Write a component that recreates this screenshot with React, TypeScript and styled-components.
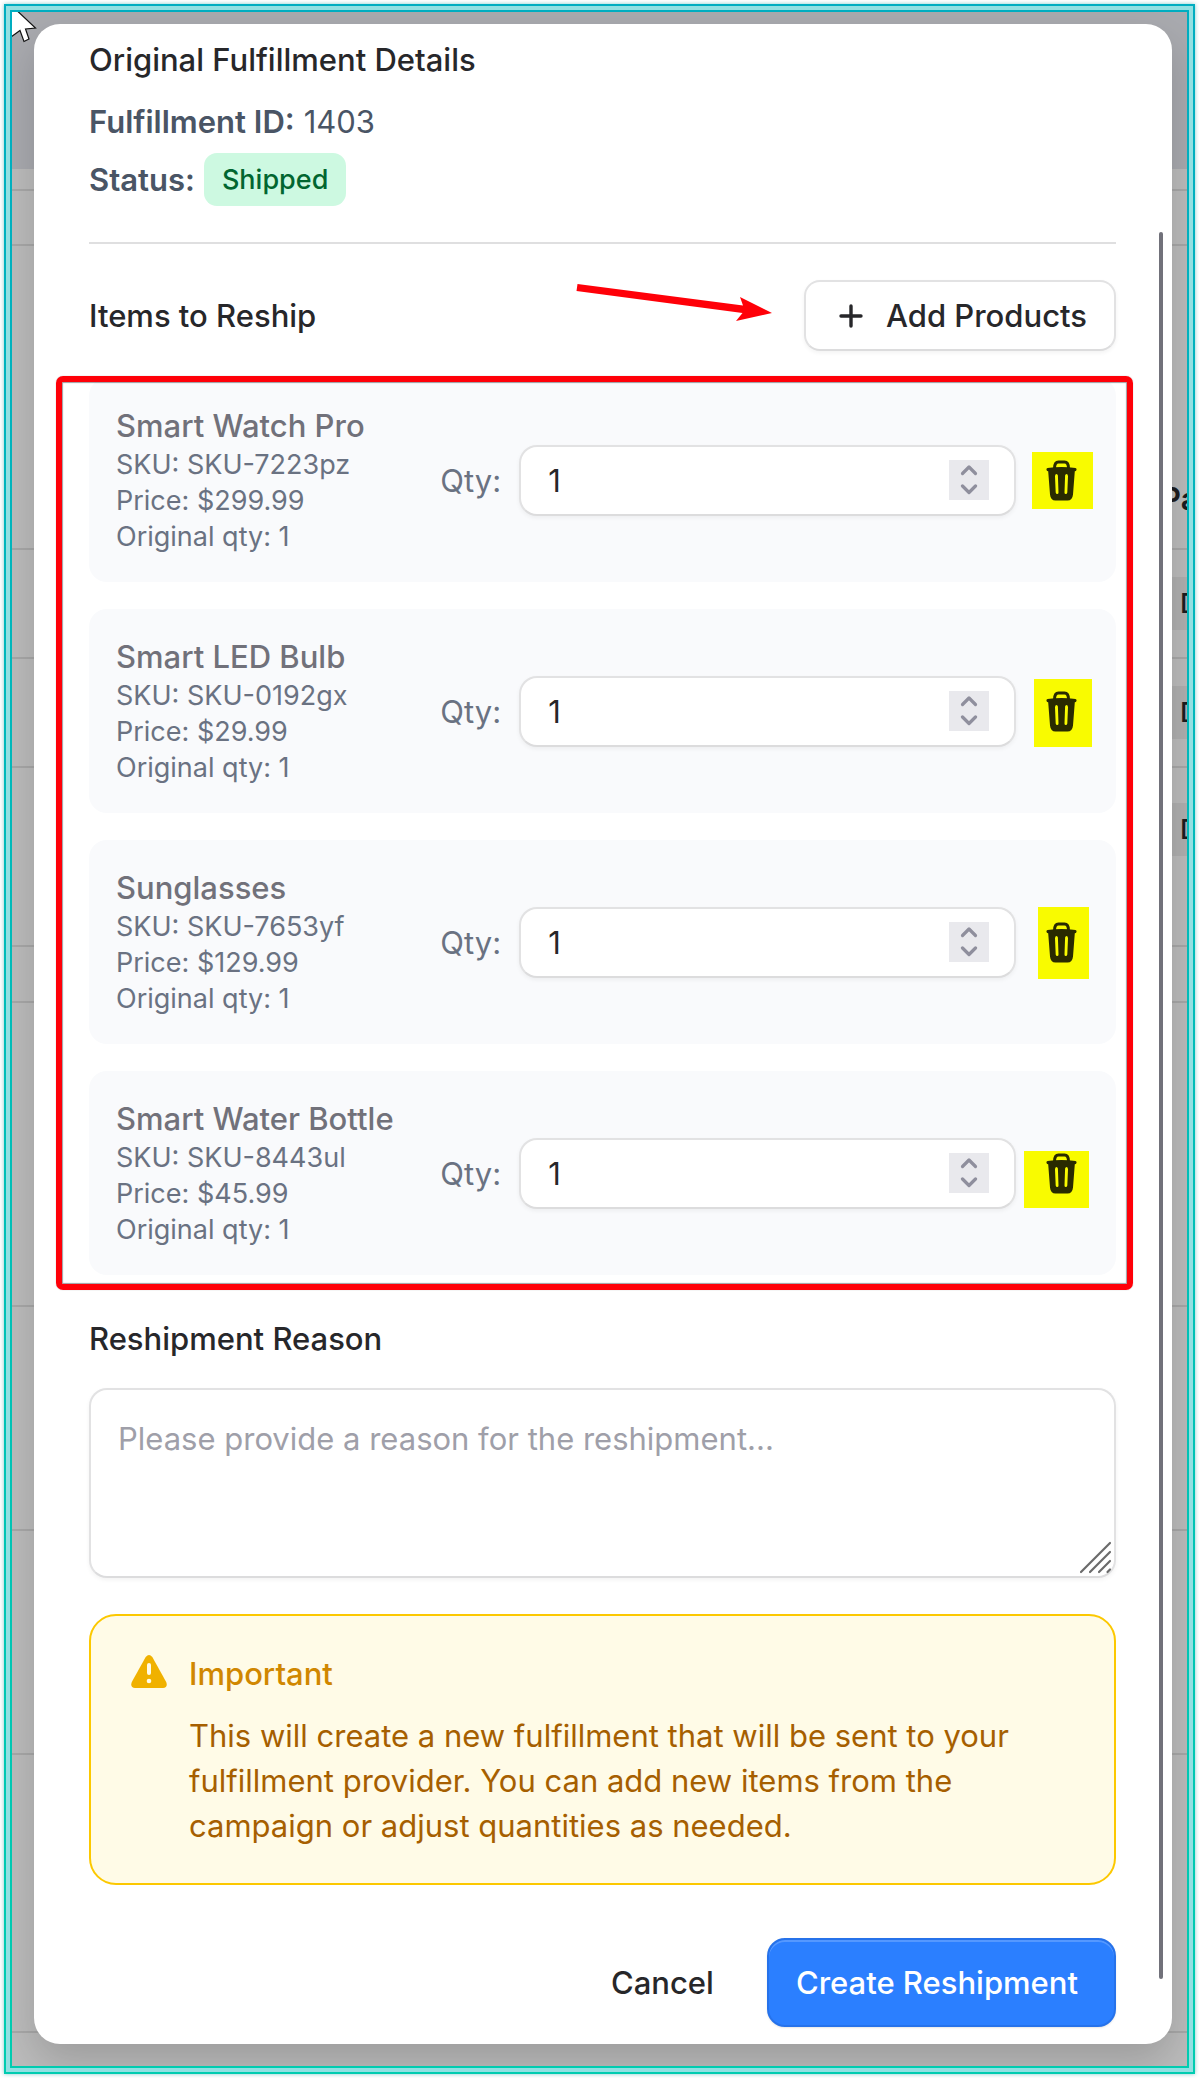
import React, { useState } from "react";
import styled, { createGlobalStyle } from "styled-components";

const GlobalStyle = createGlobalStyle`
  *, *::before, *::after { box-sizing: border-box; }
  body {
    margin: 0;
    background: #fff;
    font-family: Inter, "Liberation Sans", sans-serif;
    font-size: 31px;
    line-height: 45px;
    color: #27272a;
  }
  h2, h3, p, dl, dd, dt, ul { margin: 0; padding: 0; }
  button, input, textarea { font: inherit; color: inherit; }
  button { cursor: pointer; }
`;

/* Glowing double frame */
const Frame = styled.div`
  margin: 4px;
  padding: 2px;
  background: linear-gradient(#00adc0, #00ccb0);
  box-shadow: 0 0 4px rgba(0, 150, 150, 0.5);
`;
const FrameGlow = styled.div`
  padding: 4px;
  background: #92e0e2;
`;
const FrameInner = styled.div`
  padding: 2px;
  background: linear-gradient(#00adc0, #00ccb0);
`;
const Stage = styled.div`
  position: relative;
  display: grid;
  overflow: hidden;
  background: #bcbcbc;
`;

/* Dimmed page behind the dialog */
const Backdrop = styled.div`
  grid-area: 1 / 1;
  display: flex;
  flex-direction: column;
  color: #1c1c20;
`;
const BackdropHeader = styled.div`
  height: 157px;
  background: #a9aaaf;
`;
const BackdropRow = styled.div<{ $h: number; $align?: string }>`
  display: flex;
  justify-content: flex-end;
  align-items: ${(p) => p.$align ?? "center"};
  height: ${(p) => p.$h}px;
  padding: ${(p) => (p.$align ? "35px 0 27px" : "0")};
  border-bottom: 2px solid #a8a8a8;
`;
const ColumnHead = styled.span`
  width: 26px;
  overflow: hidden;
  font-weight: 600;
`;
const BackdropBadge = styled.span`
  width: 21px;
  height: 53px;
  padding-left: 14px;
  overflow: hidden;
  font-size: 27px;
  font-weight: 500;
  line-height: 53px;
  background: #b0b0b0;
`;
const Pointer = styled.svg`
  position: absolute;
  top: 0;
  left: 0;
`;

const Dialog = styled.section`
  grid-area: 1 / 1;
  position: relative;
  display: flex;
  flex-direction: column;
  margin: 12px 15px 22px 22px;
  padding: 13px 56px 17px 55px;
  background: #fff;
  border-radius: 26px;
  box-shadow: 0 18px 40px rgba(0, 0, 0, 0.17);
`;
const ScrollThumb = styled.div`
  position: absolute;
  top: 208px;
  right: 9px;
  bottom: 65px;
  width: 4px;
  border-radius: 2px;
  background: #71717a;
`;

const Heading = styled.h3`
  font-size: 31px;
  font-weight: 500;
  line-height: 45px;
`;
const Details = styled.dl`
  display: flex;
  flex-direction: column;
  gap: 9px;
  margin-top: 17px;
  color: #4a5565;
`;
const Detail = styled.div`
  display: flex;
  align-items: center;
  gap: 9px;
`;
const Term = styled.dt`
  font-weight: 600;
`;
const Badge = styled.span`
  display: block;
  padding: 4px 18px;
  border-radius: 13px;
  background: #cdf9e1;
  color: #016630;
  font-size: 27px;
  font-weight: 500;
`;
const Divider = styled.hr`
  width: 100%;
  height: 2px;
  margin: 36px 0;
  border: 0;
  background: #dfdfe0;
`;

const SectionHead = styled.div`
  position: relative;
  display: flex;
  align-items: center;
  justify-content: space-between;
`;
const Arrow = styled.svg`
  position: absolute;
  top: 0;
  right: 343px;
`;
const OutlineButton = styled.button`
  display: flex;
  align-items: center;
  gap: 23px;
  height: 71px;
  padding: 0 27px 0 33px;
  border: 2px solid #e2e2e3;
  border-bottom-color: #dcdcdd;
  border-radius: 16px;
  background: #fff;
  box-shadow: 0 2px 4px rgba(0, 0, 0, 0.05);
  font-weight: 500;
`;

const ItemList = styled.ul`
  position: relative;
  display: flex;
  flex-direction: column;
  gap: 27px;
  margin: 27px 0 41px;
  list-style: none;
`;
const RedOutline = styled.div`
  position: absolute;
  top: -2px;
  right: -17px;
  bottom: -15px;
  left: -33px;
  border: 6px solid #ff0008;
  border-radius: 7px;
  box-shadow: inset 0 0 1px 1px rgba(60, 60, 70, 0.5), 0 0 1px rgba(60, 60, 70, 0.5);
  pointer-events: none;
`;
const ItemCard = styled.li`
  display: grid;
  grid-template-columns: minmax(0, 1fr) minmax(0, 2fr);
  align-items: center;
  padding: 27px;
  border-radius: 18px;
  background: #f9fafc;
`;
const ItemName = styled.p`
  color: #71717a;
  font-weight: 500;
  line-height: 42px;
`;
const ItemMeta = styled.p`
  color: #6a7282;
  font-size: 27px;
  line-height: 36px;
`;
const QtyGroup = styled.div`
  display: flex;
  align-items: center;
  gap: 18px;
  color: #6a7282;
`;
const QtyField = styled.div`
  display: flex;
  flex: 1;
  align-items: center;
  min-width: 0;
  height: 71px;
  padding-right: 25px;
  border: 2px solid #e2e2e3;
  border-bottom-color: #dcdcdd;
  border-radius: 18px;
  background: #fff;
  box-shadow: 0 2px 4px rgba(0, 0, 0, 0.05);
`;
const QtyInput = styled.input`
  flex: 1;
  min-width: 0;
  padding: 0 0 0 27px;
  border: 0;
  outline: 0;
  background: transparent;
  color: #27272a;
  appearance: textfield;
  &::-webkit-inner-spin-button { appearance: none; margin: 0; }
`;
const Stepper = styled.div`
  display: flex;
  flex-direction: column;
  width: 40px;
  height: 40px;
  background: #e9e9ed;
`;
const StepButton = styled.button`
  display: flex;
  align-items: center;
  justify-content: center;
  height: 20px;
  padding: 0;
  border: 0;
  background: transparent;
`;
type Mark = { x: number; y: number; w: number; h: number };
const DeleteButton = styled.button<{ $mark: Mark }>`
  position: relative;
  display: flex;
  align-items: center;
  justify-content: center;
  width: 55px;
  height: 56px;
  padding: 0;
  border: 0;
  background: transparent;
  &::before {
    content: "";
    position: absolute;
    left: ${(p) => p.$mark.x}px;
    top: ${(p) => p.$mark.y}px;
    width: ${(p) => p.$mark.w}px;
    height: ${(p) => p.$mark.h}px;
    background: #f9fb00;
  }
  svg { position: relative; }
`;

const ReasonLabel = styled.label`
  font-weight: 500;
`;
const ReasonField = styled.div`
  position: relative;
  display: flex;
  margin: 27px 0 36px;
`;
const ReasonInput = styled.textarea`
  width: 100%;
  height: 190px;
  padding: 26px 27px;
  border: 2px solid #e2e2e3;
  border-bottom-color: #dcdcdd;
  border-radius: 18px;
  outline: 0;
  background: #fff;
  box-shadow: 0 2px 4px rgba(0, 0, 0, 0.05);
  resize: none;
  &::placeholder { color: #9f9fa9; opacity: 1; }
`;
const Grip = styled.svg`
  position: absolute;
  right: 4px;
  bottom: 4px;
  pointer-events: none;
`;

const Alert = styled.div`
  display: flex;
  align-items: flex-start;
  gap: 22px;
  padding: 35px 40px;
  border: 2px solid #fcc800;
  border-radius: 27px;
  background: #fffbe7;
`;
const AlertIcon = styled.svg`
  flex: none;
  margin-top: 4px;
`;
const AlertTitle = styled.h3`
  margin-bottom: 17px;
  color: #d08700;
  font-size: 31px;
  font-weight: 500;
  line-height: 45px;
`;
const AlertText = styled.p`
  color: #a65f00;
`;

const Footer = styled.footer`
  display: flex;
  justify-content: flex-end;
  gap: 27px;
  margin-top: 53px;
`;
const PlainButton = styled.button`
  padding: 0 26px;
  border: 0;
  background: transparent;
  font-weight: 500;
`;
const PrimaryButton = styled.button`
  height: 89px;
  padding: 0 36px 0 27px;
  border: 2px solid #2672ea;
  border-radius: 18px;
  background: #2b7fff;
  box-shadow: inset 0 2px 0 rgba(255, 255, 255, 0.2), 0 1px 2px rgba(0, 0, 0, 0.1);
  color: #fff;
  font-weight: 500;
`;

const TrashIcon = () => (
  <svg width="31" height="41" viewBox="0 0 31 41" fill="none" aria-hidden="true">
    <path d="M8.500 8.500C8.500 3.500 10 2 12.500 2H18.500C21 2 22.500 3.500 22.500 8.500" stroke="#292a00" strokeWidth="3" />
    <path
      fill="#292a00"
      fillRule="evenodd"
      d="M1.500 8Q15.500 5.800 29.500 8Q31 8.500 30.500 10Q30 11.200 28.800 11.200L27 34.500Q26.400 40.500 21.500 40.500H9.500Q4.600 40.500 4 34.500L2.200 11.200Q1 11.200 .5 10Q0 8.500 1.500 8ZM9 16.500L9.700 32.500Q10 34 11.200 34Q12.500 34 12.500 32.500L11.900 15.500Q11.700 14 10.300 14Q9 14 9 16.500ZM22 16.500L21.300 32.500Q21 34 19.800 34Q18.500 34 18.500 32.500L19.100 15.500Q19.300 14 20.700 14Q22 14 22 16.500Z"
    />
  </svg>
);

const Chevron = ({ down }: { down?: boolean }) => (
  <svg width="18" height="12" viewBox="0 0 18 12" fill="none" aria-hidden="true">
    <path
      d={down ? "M2.500 2L9 8.500L15.500 2" : "M2.500 9.500L9 3L15.500 9.500"}
      stroke="#8f8f9d"
      strokeWidth="3.200"
      strokeLinecap="round"
      strokeLinejoin="round"
    />
  </svg>
);

const ITEMS = [
  { name: "Smart Watch Pro", sku: "SKU-7223pz", price: "$299.99", mark: { x: -2, y: 0, w: 61, h: 57 } },
  { name: "Smart LED Bulb", sku: "SKU-0192gx", price: "$29.99", mark: { x: 0, y: -4, w: 58, h: 68 } },
  { name: "Sunglasses", sku: "SKU-7653yf", price: "$129.99", mark: { x: 4, y: -7, w: 51, h: 72 } },
  { name: "Smart Water Bottle", sku: "SKU-8443ul", price: "$45.99", mark: { x: -10, y: 6, w: 65, h: 57 } },
];

function Item({ item }: { item: (typeof ITEMS)[number] }) {
  const [qty, setQty] = useState(1);
  return (
    <ItemCard>
      <div>
        <ItemName>{item.name}</ItemName>
        <ItemMeta>SKU: {item.sku}</ItemMeta>
        <ItemMeta>Price: {item.price}</ItemMeta>
        <ItemMeta>Original qty: 1</ItemMeta>
      </div>
      <QtyGroup>
        <label htmlFor={item.sku}>Qty:</label>
        <QtyField>
          <QtyInput
            id={item.sku}
            type="number"
            min={1}
            value={qty}
            onChange={(e) => setQty(Number(e.target.value))}
          />
          <Stepper>
            <StepButton type="button" aria-label="Increase quantity" onClick={() => setQty(qty + 1)}>
              <Chevron />
            </StepButton>
            <StepButton type="button" aria-label="Decrease quantity" onClick={() => setQty(Math.max(1, qty - 1))}>
              <Chevron down />
            </StepButton>
          </Stepper>
        </QtyField>
        <DeleteButton type="button" aria-label={`Remove ${item.name}`} $mark={item.mark}>
          <TrashIcon />
        </DeleteButton>
      </QtyGroup>
    </ItemCard>
  );
}

export default function App() {
  return (
    <>
      <GlobalStyle />
      <Frame>
        <FrameGlow>
          <FrameInner>
            <Stage>
              <Backdrop aria-hidden="true">
                <BackdropHeader />
                <BackdropRow $h={22} />
                <BackdropRow $h={55} />
                <BackdropRow $h={304} $align="flex-end">
                  <ColumnHead>Pa</ColumnHead>
                </BackdropRow>
                <BackdropRow $h={109}>
                  <BackdropBadge>D</BackdropBadge>
                </BackdropRow>
                <BackdropRow $h={109}>
                  <BackdropBadge>D</BackdropBadge>
                </BackdropRow>
                <BackdropRow $h={179} $align="flex-start">
                  <BackdropBadge>D</BackdropBadge>
                </BackdropRow>
                <BackdropRow $h={56} />
                <BackdropRow $h={304} />
                <BackdropRow $h={224} />
                <BackdropRow $h={224} />
                <BackdropRow $h={278} />
              </Backdrop>

              <Dialog role="dialog" aria-label="Create reshipment">
                <Heading>Original Fulfillment Details</Heading>
                <Details>
                  <Detail>
                    <Term>Fulfillment ID:</Term>
                    <dd>1403</dd>
                  </Detail>
                  <Detail>
                    <Term>Status:</Term>
                    <dd>
                      <Badge>Shipped</Badge>
                    </dd>
                  </Detail>
                </Details>
                <Divider />

                <SectionHead>
                  <Heading>Items to Reship</Heading>
                  <Arrow width="200" height="48" viewBox="0 0 200 48" aria-hidden="true">
                    <path fill="#ff0008" d="M4.500 4L170 25.500L167 17L199 33L163 41L169.500 33L3.500 11Z" />
                  </Arrow>
                  <OutlineButton type="button">
                    <svg width="24" height="24" viewBox="0 0 24 24" fill="none" aria-hidden="true">
                      <path d="M12 2V22M2 12H22" stroke="#27272a" strokeWidth="3.400" strokeLinecap="round" />
                    </svg>
                    Add Products
                  </OutlineButton>
                </SectionHead>

                <ItemList>
                  {ITEMS.map((item) => (
                    <Item key={item.sku} item={item} />
                  ))}
                  <RedOutline as="li" aria-hidden="true" />
                </ItemList>

                <ReasonLabel htmlFor="reason">Reshipment Reason</ReasonLabel>
                <ReasonField>
                  <ReasonInput id="reason" placeholder="Please provide a reason for the reshipment..." />
                  <Grip width="33" height="33" viewBox="0 0 33 33" aria-hidden="true">
                    <path
                      d="M2 31L31 2M11 31L31 11M20 31L31 20M28.500 31L31 28.500"
                      stroke="#6b6b6b"
                      strokeWidth="2.200"
                      strokeLinecap="round"
                    />
                  </Grip>
                </ReasonField>

                <Alert role="note">
                  <AlertIcon width="36" height="33" viewBox="0 0 36 33" aria-hidden="true">
                    <path
                      fill="#f0b100"
                      d="M14.700 2Q18 -2 21.300 2L35.200 27Q37.200 32.500 32 33H4Q-1.200 32.500 .8 27Z"
                    />
                    <rect x="16" y="8" width="4" height="12" rx="2" fill="#fffbe8" />
                    <circle cx="18" cy="26" r="2.300" fill="#fffbe8" />
                  </AlertIcon>
                  <div>
                    <AlertTitle>Important</AlertTitle>
                    <AlertText>
                      This will create a new fulfillment that will be sent to your fulfillment provider. You can add
                      new items from the campaign or adjust quantities as needed.
                    </AlertText>
                  </div>
                </Alert>

                <Footer>
                  <PlainButton type="button">Cancel</PlainButton>
                  <PrimaryButton type="button">Create Reshipment</PrimaryButton>
                </Footer>
                <ScrollThumb />
              </Dialog>

              <Pointer width="26" height="32" viewBox="0 0 26 32" aria-hidden="true">
                <path d="M-1 -7L23.500 16L13.500 17L17 27L12 29.500L8 18.500L-1 25Z" fill="#fff" stroke="#111" strokeWidth="1.200" />
              </Pointer>
            </Stage>
          </FrameInner>
        </FrameGlow>
      </Frame>
    </>
  );
}
